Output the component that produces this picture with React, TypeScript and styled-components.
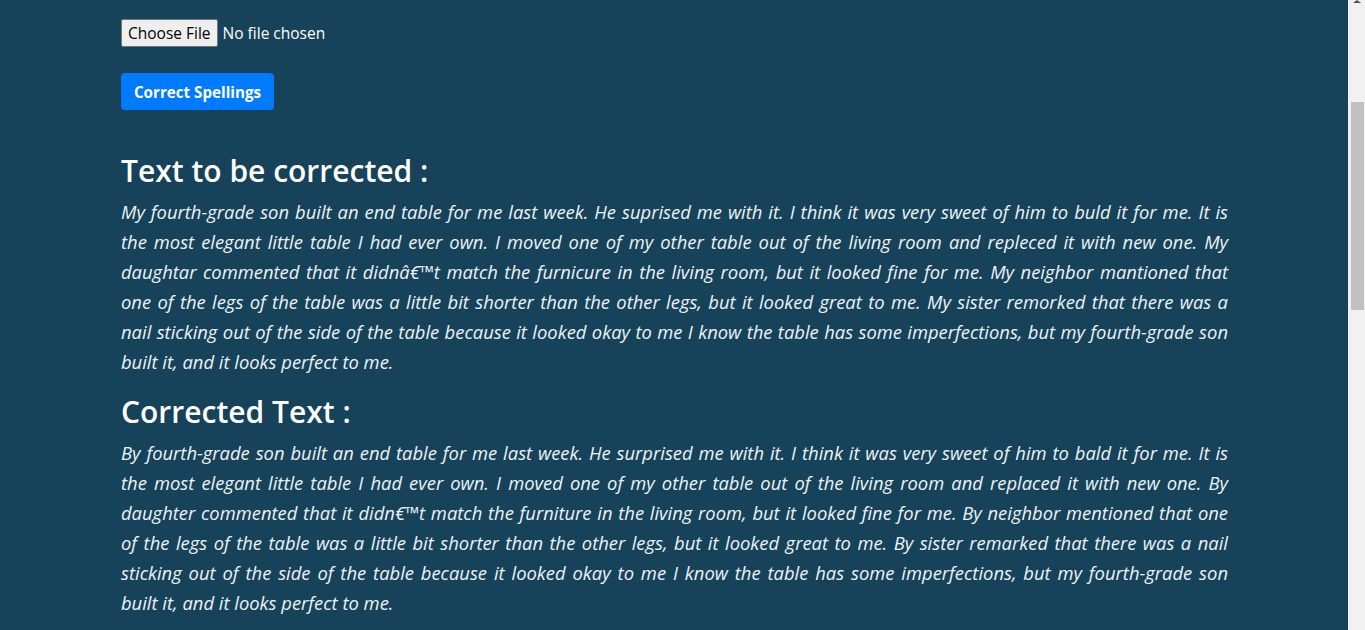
import React from "react";
import styled, { createGlobalStyle } from "styled-components";

const Global = createGlobalStyle`
  html, body { margin: 0; padding: 0; height: 100%; overflow: hidden; }
  body { background: #16435a; font-family: "Segoe UI", "Open Sans", "Noto Sans", sans-serif; }
`;

const Shell = styled.div`
  display: grid;
  grid-template-columns: 1fr 17px;
  height: 630px;
  overflow: hidden;
`;

const Main = styled.main`
  background: #16435a;
  overflow: hidden;
`;

const Container = styled.div`
  width: 1108px;
  margin: 0 auto;
  padding-top: 19px;
  padding-left: 1px;
  box-sizing: border-box;
`;

const FileRow = styled.label`
  display: flex;
  align-items: center;
  gap: 5px;
  height: 28px;
  color: #ffffff;
  font-family: "Segoe UI", "Open Sans", sans-serif;
  font-size: 15.5px;
`;

const FileButton = styled.span`
  display: inline-flex;
  align-items: center;
  height: 28px;
  box-sizing: border-box;
  padding: 0 6px;
  background: #efefef;
  border: 1px solid #767676;
  border-radius: 2px;
  color: #000;
  font-size: 15.5px;
`;

const HiddenInput = styled.input`
  display: none;
`;

const PrimaryButton = styled.button`
  display: block;
  margin-top: 26px;
  height: 37px;
  width: 153px;
  padding: 0;
  border: none;
  border-radius: 4px;
  background: #007bff;
  color: #ffffff;
  font-family: "Segoe UI", "Open Sans", sans-serif;
  font-weight: 700;
  font-size: 15.2px;
`;

const Heading = styled.h2<{ $top: number }>`
  margin: ${(p) => p.$top}px 0 7px;
  color: #ffffff;
  font-family: "Segoe UI", "Open Sans", sans-serif;
  font-weight: 600;
  font-size: 30px;
  line-height: 38px;
`;

const Paragraph = styled.p`
  margin: 0 0 16px;
  color: #eef2f5;
  font-family: "Segoe UI", "Open Sans", sans-serif;
  font-style: italic;
  font-size: 18.4px;
  line-height: 30px;
`;

const Line = styled.span<{ $last?: boolean }>`
  display: block;
  white-space: nowrap;
  text-align: justify;
  text-align-last: ${(p) => (p.$last ? "left" : "justify")};
`;

const Track = styled.div`
  background: #f1f1f1;
  display: flex;
  flex-direction: column;
  align-items: center;
  padding-top: 102px;
  position: relative;
`;

const Thumb = styled.div`
  width: 13px;
  height: 208px;
  margin-left: 1px;
  background: #c1c1c1;
`;

const Arrow = styled.div`
  position: absolute;
  top: 0;
  left: 5px;
  width: 0;
  height: 0;
  border-left: 4px solid transparent;
  border-right: 4px solid transparent;
  border-bottom: 3px solid #505050;
`;

const original = [
  "My fourth-grade son built an end table for me last week. He suprised me with it. I think it was very sweet of him to buld it for me. It is",
  "the most elegant little table I had ever own. I moved one of my other table out of the living room and repleced it with new one. My",
  "daughtar commented that it didnâ€™t match the furnicure in the living room, but it looked fine for me. My neighbor mantioned that",
  "one of the legs of the table was a little bit shorter than the other legs, but it looked great to me. My sister remorked that there was a",
  "nail sticking out of the side of the table because it looked okay to me I know the table has some imperfections, but my fourth-grade son",
  "built it, and it looks perfect to me.",
];

const corrected = [
  "By fourth-grade son built an end table for me last week. He surprised me with it. I think it was very sweet of him to bald it for me. It is",
  "the most elegant little table I had ever own. I moved one of my other table out of the living room and replaced it with new one. By",
  "daughter commented that it didn€™t match the furniture in the living room, but it looked fine for me. By neighbor mentioned that one",
  "of the legs of the table was a little bit shorter than the other legs, but it looked great to me. By sister remarked that there was a nail",
  "sticking out of the side of the table because it looked okay to me I know the table has some imperfections, but my fourth-grade son",
  "built it, and it looks perfect to me.",
];

const Para = ({ lines }: { lines: string[] }) => (
  <Paragraph>
    {lines.map((l, i) => (
      <Line key={i} $last={i === lines.length - 1}>
        {l}
      </Line>
    ))}
  </Paragraph>
);

export default function App() {
  return (
    <>
      <Global />
      <Shell>
        <Main>
          <Container>
            <FileRow>
              <FileButton>Choose File</FileButton>
              <span>No file chosen</span>
              <HiddenInput type="file" />
            </FileRow>
            <PrimaryButton>Correct Spellings</PrimaryButton>
            <Heading $top={42}>Text to be corrected :</Heading>
            <Para lines={original} />
            <Heading $top={0}>Corrected Text :</Heading>
            <Para lines={corrected} />
          </Container>
        </Main>
        <Track>
          <Arrow />
          <Thumb />
        </Track>
      </Shell>
    </>
  );
}
